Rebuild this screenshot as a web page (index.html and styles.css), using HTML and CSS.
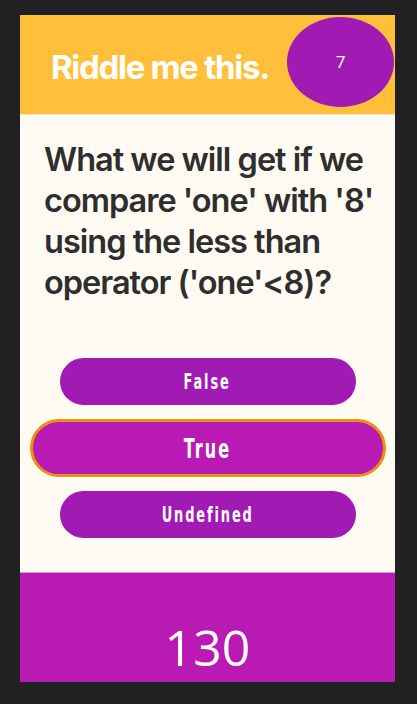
FILE: index.html
```html
<!DOCTYPE html>
<html>
<head>
<meta charset="utf-8">
<link rel="stylesheet" href="styles.css">
</head>
<body>
<div class="card">
  <header class="head">
    <h1 class="title">Riddle me this.</h1>
    <div class="badge">7</div>
  </header>
  <main class="content">
    <p class="question">What we will get if we compare 'one' with '8' using the less than operator ('one'&lt;8)?</p>
    <div class="answers">
      <button class="answer"><span class="label">False</span></button>
      <button class="answer selected"><span class="label">True</span></button>
      <button class="answer"><span class="label">Undefined</span></button>
    </div>
  </main>
  <footer class="foot">
    <span class="score">130</span>
  </footer>
</div>
</body>
</html>
```
FILE: styles.css
```css
html, body {
  margin: 0;
  padding: 0;
  background: #212123;
}
body {
  padding: 15px 22px 0 20px;
}
.card {
  width: 375px;
  display: flex;
  flex-direction: column;
}
.head {
  height: 100px;
  background: #ffbf3a;
  display: flex;
  align-items: flex-start;
  justify-content: space-between;
  border-bottom: 1px solid #f4e7c8;
  box-sizing: border-box;
}
.title {
  margin: 33px 0 0 31px;
  font-family: "Inter", "Lato", sans-serif;
  font-weight: 700;
  font-size: 33px;
  letter-spacing: -1.3px;
  color: #ffffff;
  line-height: 38px;
  white-space: nowrap;
}
.badge {
  width: 107px;
  height: 90px;
  margin: 2px 1px 0 0;
  border-radius: 50%;
  background: #a01ab3;
  color: #fff;
  font-family: "Open Sans", sans-serif;
  font-size: 17px;
  display: flex;
  align-items: center;
  justify-content: center;
  padding-bottom: 2px;
  box-sizing: border-box;
}
.content {
  height: 457px;
  background: #fffbf3;
  box-sizing: border-box;
  padding: 24px 0 0 24px;
}
.question {
  margin: 0;
  width: 335px;
  font-family: "Inter", "Lato", sans-serif;
  font-weight: 600;
  font-size: 32.5px;
  line-height: 41px;
  letter-spacing: -1px;
  color: #2e2e2e;
}
.answers {
  margin: 55px 0 0 -24px;
  display: flex;
  flex-direction: column;
  align-items: center;
  gap: 14px;
}
.answer {
  width: 296px;
  height: 47px;
  border: none;
  border-radius: 24px;
  background: #a01ab3;
  color: #fff;
  font-family: "DejaVu Sans Condensed", "DejaVu Sans", sans-serif;
  font-weight: 700;
  font-size: 21.5px;
  letter-spacing: 2.8px;
  padding: 0;
  display: flex;
  align-items: center;
  justify-content: center;
}
.label {
  display: inline-block;
  transform: scaleX(0.67);
}
.answer.selected {
  width: 356px;
  height: 58px;
  border: 3px solid #e69510;
  border-radius: 29px;
  background: #b81ab3;
  font-size: 26.5px;
  letter-spacing: 3.2px;
}
.foot {
  height: 110px;
  background: #b91ab3;
  border-top: 1px solid #d79ad3;
  box-sizing: border-box;
  display: flex;
  justify-content: center;
  align-items: flex-end;
}
.score {
  font-family: "Open Sans", sans-serif;
  font-size: 50px;
  color: #fff;
  line-height: 1;
  margin-bottom: 10px;
}
```
